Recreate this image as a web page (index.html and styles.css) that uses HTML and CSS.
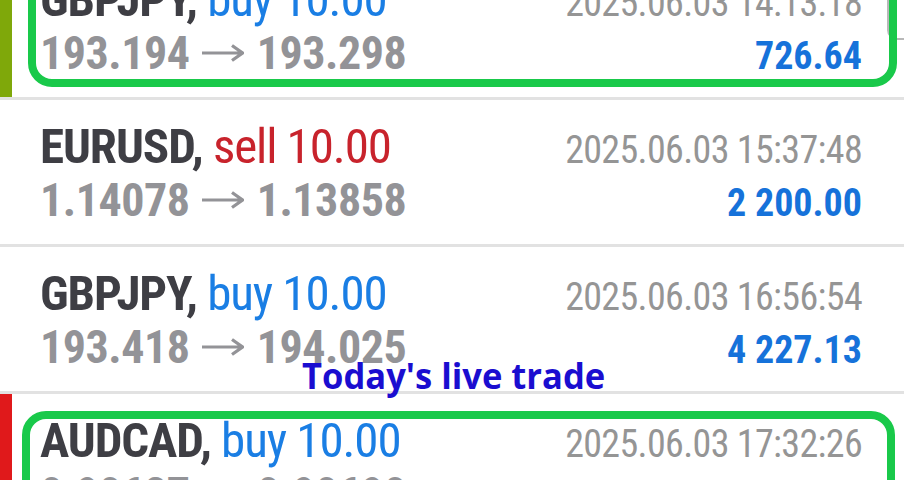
FILE: index.html
```html
<!DOCTYPE html>
<html lang="en">
<head>
<meta charset="utf-8">
<title>Trades</title>
<link rel="stylesheet" href="styles.css">
</head>
<body>
<div class="screen">
  <div class="list">
    <div class="row">
      <div class="marker marker-olive"></div>
      <div class="body">
        <div class="line1"><span class="pair"><span class="sym">GBPJPY,</span> <span class="buy">buy 10.00</span></span><span class="date">2025.06.03 14:13:18</span></div>
        <div class="line2"><span class="prices">193.194<svg class="arrow" viewBox="0 0 43 20" aria-label="→"><path d="M1 10H41M31 2.5L41.5 10L31 17.5"/></svg>193.298</span><span class="profit">726.64</span></div>
      </div>
    </div>
    <div class="row">
      <div class="marker"></div>
      <div class="body">
        <div class="line1"><span class="pair"><span class="sym">EURUSD,</span> <span class="sell">sell 10.00</span></span><span class="date">2025.06.03 15:37:48</span></div>
        <div class="line2"><span class="prices">1.14078<svg class="arrow" viewBox="0 0 43 20" aria-label="→"><path d="M1 10H41M31 2.5L41.5 10L31 17.5"/></svg>1.13858</span><span class="profit">2 200.00</span></div>
      </div>
    </div>
    <div class="row">
      <div class="marker"></div>
      <div class="body">
        <div class="line1"><span class="pair"><span class="sym">GBPJPY,</span> <span class="buy">buy 10.00</span></span><span class="date">2025.06.03 16:56:54</span></div>
        <div class="line2"><span class="prices">193.418<svg class="arrow" viewBox="0 0 43 20" aria-label="→"><path d="M1 10H41M31 2.5L41.5 10L31 17.5"/></svg>194.025</span><span class="profit">4 227.13</span></div>
      </div>
    </div>
    <div class="row">
      <div class="marker marker-red"></div>
      <div class="body">
        <div class="line1"><span class="pair"><span class="sym">AUDCAD,</span> <span class="buy">buy 10.00</span></span><span class="date">2025.06.03 17:32:26</span></div>
        <div class="line2"><span class="prices">0.90627<svg class="arrow" viewBox="0 0 43 20" aria-label="→"><path d="M1 10H41M31 2.5L41.5 10L31 17.5"/></svg>0.90690</span><span class="profit">45.75</span></div>
      </div>
    </div>
  </div>
  <div class="corner"></div>
  <div class="hl hl-top"></div>
  <div class="hl hl-bottom"></div>
  <div class="caption">Today's live trade</div>
</div>
</body>
</html>
```
FILE: styles.css
```css
html, body {
  margin: 0;
  padding: 0;
  background: #ffffff;
}
.screen {
  position: relative;
  width: 904px;
  height: 480px;
  overflow: hidden;
  background: #ffffff;
  font-family: "Roboto Condensed", Roboto, "Liberation Sans", sans-serif;
  font-stretch: condensed;
}
.list {
  margin-top: -47px;
}
.row {
  display: flex;
  height: 147px;
  box-sizing: border-box;
  border-bottom: 3px solid #e2e2e2;
}
.marker {
  width: 12px;
  flex: none;
}
.marker-olive { background: #7fa80a; }
.marker-red { background: #e0191b; }
.body {
  flex: 1;
  padding: 21px 42px 0 28px;
}
.line1, .line2 {
  display: flex;
  justify-content: space-between;
  align-items: baseline;
  white-space: nowrap;
}
.line1 { height: 52px; line-height: 52px; }
.line2 { height: 54px; line-height: 54px; }
.pair { font-size: 49px; letter-spacing: -0.022em; }
.sym { font-weight: 700; color: #3e3e44; }
.buy { color: #1a7ee4; }
.sell { color: #c8232c; }
.date { font-size: 38px; color: #959595; letter-spacing: -0.017em; }
.prices { font-size: 46px; font-weight: 700; color: #939397; letter-spacing: -0.01em; }
.arrow {
  width: 43px;
  height: 20px;
  margin: 0 13px 0 11px;
  vertical-align: 6px;
  fill: none;
  stroke: #939397;
  stroke-width: 3.2;
  stroke-linecap: butt;
  stroke-linejoin: miter;
}
.profit { font-size: 38px; font-weight: 700; color: #1672da; }
.hl {
  position: absolute;
  box-sizing: border-box;
  border: 8px solid #19c94a;
  border-radius: 24px;
}
.hl-top { left: 28px; top: -40px; width: 869px; height: 127px; }
.hl-bottom { left: 22px; top: 411px; width: 873px; height: 200px; }
.corner {
  position: absolute;
  left: 887px;
  top: -30px;
  width: 40px;
  height: 70px;
  box-sizing: border-box;
  border: 2px solid #b8b8b8;
  border-radius: 10px;
}
.caption {
  position: absolute;
  left: 302px;
  top: 354px;
  font-family: "Open Sans", "Noto Sans", sans-serif;
  font-stretch: normal;
  font-weight: 700;
  font-size: 36px;
  line-height: 44px;
  color: #1a0dd0;
  white-space: nowrap;
  transform: scaleX(0.96);
  transform-origin: left center;
}
```
